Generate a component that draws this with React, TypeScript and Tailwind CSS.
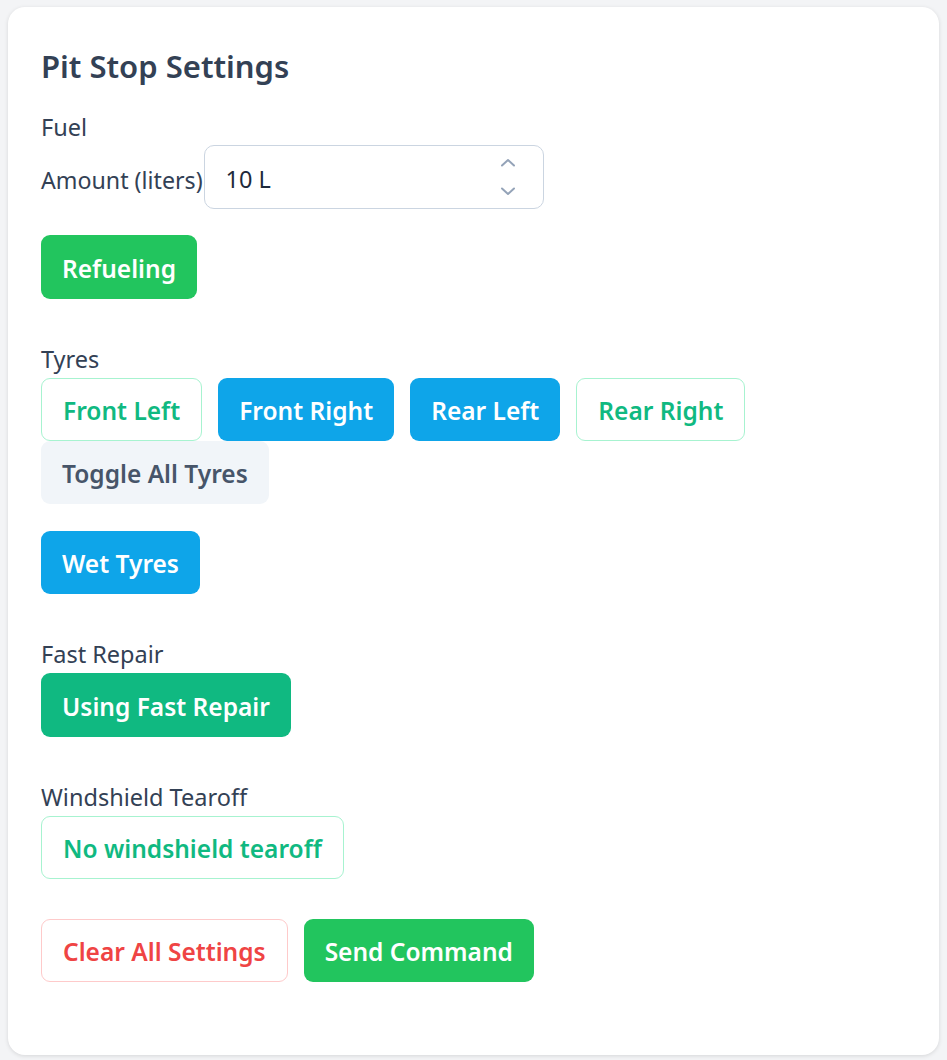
import { useState } from "react"

const font = { fontFamily: '"Noto Sans", "Open Sans", sans-serif' }

const base =
  "h-[63px] px-[21px] pt-[4px] rounded-[9px] text-[24.5px] font-semibold leading-none whitespace-nowrap"

function Label({ children }: { children: React.ReactNode }) {
  return <div className="text-[23.5px] leading-[31px] text-[#334155] mb-[3px]">{children}</div>
}

export default function App() {
  const [amount] = useState(10)
  const tyres = [
    { name: "Front Left", on: false },
    { name: "Front Right", on: true },
    { name: "Rear Left", on: true },
    { name: "Rear Right", on: false },
  ]

  return (
    <div className="min-h-screen bg-[#f3f4f6] pt-[7px] px-2 pb-[5px]" style={font}>
      <div className="bg-white rounded-[17px] shadow-[0_1px_4px_rgba(0,0,0,0.12)] px-[33px] pt-[33px] pb-[73px]">
        <h2 className="text-[31px] leading-[45px] font-semibold text-[#334155] mt-[4px] mb-[23px]">
          Pit Stop Settings
        </h2>

        {/* Fuel */}
        <div className="text-[23.5px] leading-[31px] text-[#334155] mb-[2px]">Fuel</div>
        <div className="flex items-center h-[64px]">
          <span className="mt-[6px] text-[23.2px] text-[#334155] whitespace-nowrap">Amount (liters)</span>
          <div className="ml-px w-[340px] h-[64px] border border-[#cbd5e1] rounded-[10px] flex items-center pl-[21px] pr-[27px]">
            <span className="mt-[6px] flex-1 text-[23.5px] text-[#1e293b]">{amount} L</span>
            <div className="flex flex-col gap-[20px] text-[#94a3b8]">
              <svg width="16" height="9" viewBox="0 0 16 9" fill="none">
                <path d="M2 7.5 8 2l6 5.5" stroke="currentColor" strokeWidth="2" strokeLinecap="round" strokeLinejoin="round" />
              </svg>
              <svg width="16" height="9" viewBox="0 0 16 9" fill="none">
                <path d="M2 1.5 8 7l6-5.5" stroke="currentColor" strokeWidth="2" strokeLinecap="round" strokeLinejoin="round" />
              </svg>
            </div>
          </div>
        </div>
        <button className={`${base} mt-[26px] h-[64px] bg-[#22c55e] text-white`}>Refueling</button>

        {/* Tyres */}
        <div className="mt-[45px]">
          <Label>Tyres</Label>
          <div className="flex flex-wrap gap-x-4">
            {tyres.map((t) => (
              <button
                key={t.name}
                className={
                  t.on
                    ? `${base} bg-[#0ea5e9] text-white`
                    : `${base} bg-white border border-[#a7f3d0] text-[#10b981]`
                }
              >
                {t.name}
              </button>
            ))}
            <button className={`${base} bg-[#f1f5f9] text-[#475569]`}>Toggle All Tyres</button>
          </div>
          <button className={`${base} mt-[27px] bg-[#0ea5e9] text-white`}>Wet Tyres</button>
        </div>

        {/* Fast repair */}
        <div className="mt-[45px]">
          <Label>Fast Repair</Label>
          <button className={`${base} h-[64px] bg-[#10b981] text-white`}>Using Fast Repair</button>
        </div>

        {/* Tearoff */}
        <div className="mt-[45px]">
          <Label>Windshield Tearoff</Label>
          <button className={`${base} bg-white border border-[#a7f3d0] text-[#10b981]`}>
            No windshield tearoff
          </button>
        </div>

        <div className="flex gap-4 mt-[40px]">
          <button className={`${base} bg-white border border-[#fecaca] text-[#ef4444]`}>
            Clear All Settings
          </button>
          <button className={`${base} bg-[#22c55e] text-white`}>Send Command</button>
        </div>
      </div>
    </div>
  )
}
